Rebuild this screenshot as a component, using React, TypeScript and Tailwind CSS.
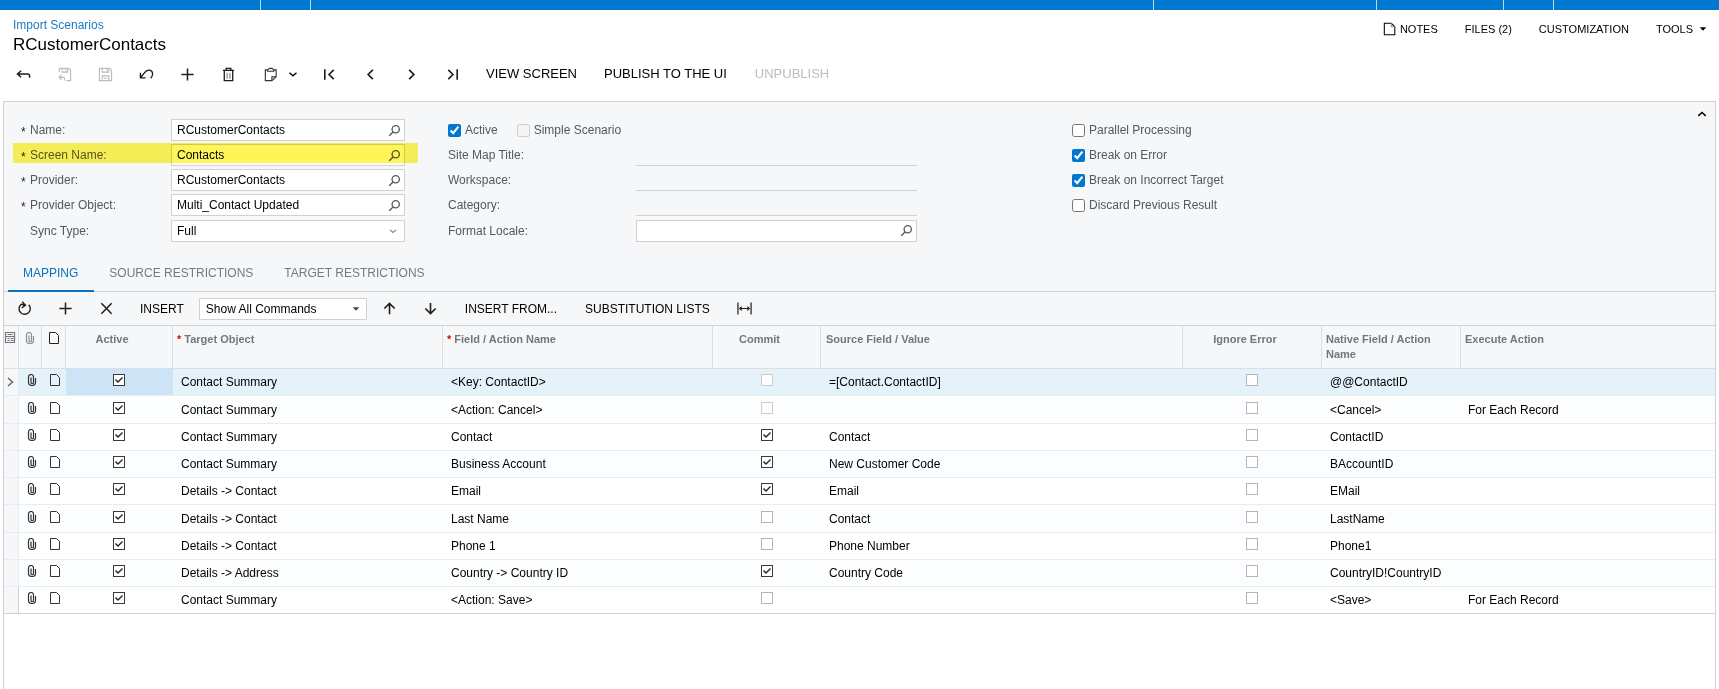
import { useState, type ReactNode } from 'react'

type IconProps = { className?: string; box?: number; children: ReactNode }

function Icon({ className = 'size-4', box = 16, children }: IconProps) {
  return (
    <svg
      viewBox={`0 0 ${box} ${box}`}
      fill="none"
      stroke="currentColor"
      strokeWidth="1.2"
      className={className}
      aria-hidden="true"
    >
      {children}
    </svg>
  )
}

const icons = {
  back: <path d="M5.5 4 1.500 7.500 5.500 11M1.500 7.500H12.500Q14.500 7.500 14.500 9.500V11.500" strokeWidth="1.500" />,
  saveClose: (
    <>
      <path d="M2.500 5.500V1.500H12.500L14.500 3.500V14.500H10M5.500 2V5.500H11.500V2M9.500 2.500V4.500" />
      <path d="M5 8.500 2 11 5 13.500M2 11H6.500Q8 11 8 12.500V14.500" />
    </>
  ),
  save: <path d="M1.500 1.500H12.500L14.500 3.500V14.500H1.500ZM4.500 1.500V5.500H11.500V1.500M9.500 2.500V4.500M4.500 14.500V9.500H11.500V14.500M6.500 12H9.500" />,
  undo: <path d="M1.500 6V11.500H7M1.800 11.200 5.500 6.500C9 1.500 14.500 3 14.500 7.500C14.500 9.500 13.500 11 12.500 12" strokeWidth="1.400" />,
  plus: <path d="M8 1.500V14.500M1.500 8H14.500" strokeWidth="1.600" />,
  trash: (
    <>
      <path d="M2 3.500H14M3.500 3.500V14.500H12.500V3.500M5.500 3.500V1.500H10.500V3.500" strokeWidth="1.400" />
      <path d="M6.500 6V12.500M9.500 6V12.500" stroke="#6f8797" />
    </>
  ),
  clipboard: (
    <>
      <path d="M5 3H2.500V14.500H9.500L14 10.500V3H11.500" />
      <path d="M5 4.500V3L7 1.500H9.500L11.500 3V4.500ZM9.500 14.500V10.500H14" />
    </>
  ),
  down: <path d="m4 6.500 4 3.500 4-3.500" strokeWidth="1.600" />,
  up: <path d="M3 10.500 8 6l5 4.500" strokeWidth="2" />,
  first: <path d="M3 2.500V13.500M12.500 3 7.500 8l5 5" strokeWidth="1.700" />,
  prev: <path d="M10.500 3 5.500 8l5 5" strokeWidth="1.800" />,
  next: <path d="m5.500 3 5 5-5 5" strokeWidth="1.800" />,
  last: <path d="m3.500 3 5 5-5 5M13 2.500V13.500" strokeWidth="1.700" />,
  search: (
    <>
      <circle cx="9.500" cy="6.500" r="4.500" strokeWidth="1.600" />
      <path d="M6.500 9.500 1.500 14.500" strokeWidth="1.800" />
    </>
  ),
  note: (
    <>
      <path d="M1.500 1.500H9.500L13.500 5.500V14.500H1.500Z" />
      <path d="M9.500 1.500V5.500H13.500" stroke="#999" />
    </>
  ),
  refresh: <path d="M12.500 4A6 6 0 1 1 4.500 3.500L8.500 4.500M5.500 .800 9 4.500 5 7.500" strokeWidth="1.500" />,
  close: <path d="m2.500 2.500 11 11M13.500 2.500l-11 11" strokeWidth="1.600" />,
  arrowUp: <path d="M8 2.500V14M2.500 8 8 2.500 13.500 8" strokeWidth="1.700" />,
  arrowDown: <path d="M8 2V13.500M2.500 8 8 13.500 13.500 8" strokeWidth="1.700" />,
  fit: <path d="M1 1.500V14.500M15 1.500V14.500M3 8H13M5 6 3 8l2 2M11 6l2 2-2 2" strokeWidth="1.300" />,
  caret: <path d="M1.500 4.500H14.500L8 11.500Z" fill="currentColor" stroke="none" />,
}

// drawn on a 12px grid for the narrow table columns
const cellIcons = {
  page: <path d="M1.500 .500H7.500L10.500 3.500V11.500H1.500Z" strokeWidth="1" />,
  clip: <path d="M9.500 4V8.500A3.500 3 0 0 1 2.500 8.500V3A2.300 2.300 0 0 1 7.500 3V8.500A1.200 1.200 0 0 1 5 8.500V3.500" strokeWidth="1.200" />,
  form: <path d="M1.500 .500H10.500V10.500H1.500ZM1.500 4.500H10.500M3.500 2.500H8.500M3.500 6.500H5.500M6.500 6.500H9.500M3.500 8.500H5.500M6.500 8.500H9.500" />,
  current: <path d="m4 2 4.500 4L4 10" strokeWidth="1.500" />,
}

type ToolProps = { label: string; icon: ReactNode; disabled?: boolean }

function Tool({ label, icon, disabled }: ToolProps) {
  return (
    <button
      type="button"
      aria-label={label}
      disabled={disabled}
      className="flex h-8 w-[41px] items-center justify-center text-[#1c1c1c] disabled:text-[#bcbcbc]"
    >
      <Icon className="size-[15px]">{icon}</Icon>
    </button>
  )
}

const lookups = [
  { id: 'name', label: 'Name:', value: 'RCustomerContacts' },
  { id: 'screen', label: 'Screen Name:', value: 'Contacts', marked: true },
  { id: 'provider', label: 'Provider:', value: 'RCustomerContacts' },
  { id: 'object', label: 'Provider Object:', value: 'Multi_Contact Updated' },
]

const plainFields = [
  { id: 'title', label: 'Site Map Title:' },
  { id: 'workspace', label: 'Workspace:' },
  { id: 'category', label: 'Category:' },
]

const options = [
  { label: 'Parallel Processing', checked: false },
  { label: 'Break on Error', checked: true },
  { label: 'Break on Incorrect Target', checked: true },
  { label: 'Discard Previous Result', checked: false },
]

type Row = {
  target: string
  field: string
  commit: boolean
  commitDisabled?: boolean
  source: string
  native: string
  execute?: string
}

const rows: Row[] = [
  { target: 'Contact Summary', field: '<Key: ContactID>', commit: false, commitDisabled: true, source: '=[Contact.ContactID]', native: '@@ContactID' },
  { target: 'Contact Summary', field: '<Action: Cancel>', commit: false, commitDisabled: true, source: '', native: '<Cancel>', execute: 'For Each Record' },
  { target: 'Contact Summary', field: 'Contact', commit: true, source: 'Contact', native: 'ContactID' },
  { target: 'Contact Summary', field: 'Business Account', commit: true, source: 'New Customer Code', native: 'BAccountID' },
  { target: 'Details -> Contact', field: 'Email', commit: true, source: 'Email', native: 'EMail' },
  { target: 'Details -> Contact', field: 'Last Name', commit: false, source: 'Contact', native: 'LastName' },
  { target: 'Details -> Contact', field: 'Phone 1', commit: false, source: 'Phone Number', native: 'Phone1' },
  { target: 'Details -> Address', field: 'Country -> Country ID', commit: true, source: 'Country Code', native: 'CountryID!CountryID' },
  { target: 'Contact Summary', field: '<Action: Save>', commit: false, source: '', native: '<Save>', execute: 'For Each Record' },
]

type CheckProps = { label: string; checked?: boolean; disabled?: boolean }

function CheckOption({ label, checked, disabled }: CheckProps) {
  return (
    <label className="flex h-[22px] items-center gap-1">
      <input type="checkbox" defaultChecked={checked} disabled={disabled} className="size-[13px] accent-[#0078d0]" />
      {label}
    </label>
  )
}

function CellCheck({ label, checked, disabled }: CheckProps) {
  return (
    <span className="mx-auto grid size-3 place-items-center">
      <input
        type="checkbox"
        aria-label={label}
        defaultChecked={checked}
        disabled={disabled}
        className="peer col-start-1 row-start-1 size-3 appearance-none border border-[#b4b5b6] bg-white checked:border-[#3a3a3a] disabled:border-[#c9cbcd]"
      />
      <svg
        viewBox="0 0 12 12"
        fill="none"
        stroke="#222"
        strokeWidth="1.400"
        className="pointer-events-none invisible col-start-1 row-start-1 size-3 peer-checked:visible"
        aria-hidden="true"
      >
        <path d="m2.500 5.500 2.500 2.500 4.500-4.500" />
      </svg>
    </span>
  )
}

const inputBox = 'flex h-[22px] items-center border border-[#cfd1d3] bg-white text-black'

function SummaryForm() {
  return (
    <div className="relative grid grid-cols-[444px_624px_1fr] pt-[17px] text-[#55585c]">
      <div className="flex flex-col gap-[3px] pl-[17px]">
        {lookups.map((f) => (
          <div key={f.id} className="relative flex h-[22px] items-center">
            <span className="w-[9px] pt-1 leading-4 text-[#222]">*</span>
            <label htmlFor={f.id} className="w-[141px]">
              {f.label}
            </label>
            <div className={`${inputBox} w-[234px]`}>
              <input id={f.id} defaultValue={f.value} className="min-w-0 flex-1 pl-[5px] outline-none" />
              <button type="button" aria-label={`Look up ${f.label}`} className="px-[3px] text-[#55585c]">
                <Icon className="size-[13px]">{icons.search}</Icon>
              </button>
            </div>
            {f.marked ? (
              <div className="pointer-events-none absolute -left-2 -top-px h-5 w-[405px] bg-[#fff558] mix-blend-multiply" />
            ) : null}
          </div>
        ))}
        <div className="flex h-[23px] items-center pl-[9px]">
          <label htmlFor="sync" className="w-[141px]">
            Sync Type:
          </label>
          <div className={`${inputBox} relative w-[234px]`}>
            <select id="sync" className="w-full appearance-none pl-[5px] outline-none">
              <option>Full</option>
            </select>
            <Icon className="pointer-events-none absolute right-[5px] size-3 text-[#7d8083]">{icons.down}</Icon>
          </div>
        </div>
      </div>

      <div className="flex flex-col gap-[3px]">
        <div className="flex gap-[19px]">
          <CheckOption label="Active" checked />
          <CheckOption label="Simple Scenario" disabled />
        </div>
        {plainFields.map((f) => (
          <div key={f.id} className="flex h-[22px] items-center">
            <label htmlFor={f.id} className="w-[188px]">
              {f.label}
            </label>
            <input id={f.id} className="h-[22px] w-[281px] border-b border-[#cfd1d3] outline-none" />
          </div>
        ))}
        <div className="flex h-[23px] items-center">
          <label htmlFor="locale" className="w-[188px]">
            Format Locale:
          </label>
          <div className={`${inputBox} w-[281px]`}>
            <input id="locale" className="min-w-0 flex-1 pl-[5px] outline-none" />
            <button type="button" aria-label="Look up locale" className="px-[3px] text-[#55585c]">
              <Icon className="size-[13px]">{icons.search}</Icon>
            </button>
          </div>
        </div>
      </div>

      <div className="flex flex-col gap-[3px]">
        {options.map((o) => (
          <CheckOption key={o.label} label={o.label} checked={o.checked} />
        ))}
      </div>

      <button type="button" aria-label="Collapse" className="absolute right-[7px] top-[6px] text-black">
        <Icon className="size-3">{icons.up}</Icon>
      </button>
    </div>
  )
}

const th = 'border-b border-r border-[#dcdee1] pt-[6px] align-top text-left leading-[15px] last:border-r-0'

function MappingTable() {
  return (
    <table className="w-full table-fixed border-separate border-spacing-0">
      <colgroup>
        <col className="w-[15px]" />
        <col className="w-[23px]" />
        <col className="w-[24px]" />
        <col className="w-[107px]" />
        <col className="w-[270px]" />
        <col className="w-[270px]" />
        <col className="w-[108px]" />
        <col className="w-[362px]" />
        <col className="w-[139px]" />
        <col className="w-[139px]" />
        <col />
      </colgroup>
      <thead className="bg-[#f5f7f9] text-[11px] text-[#74777a]">
        <tr className="h-[43px]">
          <th className={th}>
            <Icon box={12} className="size-3">{cellIcons.form}</Icon>
          </th>
          <th className={th}>
            <Icon box={12} className="mx-auto size-3 text-[#8d8f92]">{cellIcons.clip}</Icon>
          </th>
          <th className={th}>
            <Icon box={12} className="mx-auto size-3 text-[#222]">{cellIcons.page}</Icon>
          </th>
          <th className={`${th} pr-[14px]`}>
            <span className="block text-center">Active</span>
          </th>
          <th className={`${th} pl-1`}>
            <span className="mr-[3px] text-[#e00000]">*</span>Target Object
          </th>
          <th className={`${th} pl-1`}>
            <span className="mr-[3px] text-[#e00000]">*</span>Field / Action Name
          </th>
          <th className={`${th} pr-[14px]`}>
            <span className="block text-center">Commit</span>
          </th>
          <th className={`${th} pl-[5px]`}>Source Field / Value</th>
          <th className={`${th} pr-[14px]`}>
            <span className="block text-center">Ignore Error</span>
          </th>
          <th className={`${th} pl-1`}>Native Field / Action Name</th>
          <th className={`${th} pl-1`}>Execute Action</th>
        </tr>
      </thead>
      <tbody className="text-black [&_td]:border-b [&_td]:border-[#e4eef5] [&>tr:last-child>td]:border-[#cfd1d3]">
        {rows.map((r, i) => {
          const selected = i === 0
          return (
            <tr key={i} className={selected ? 'h-[27px] bg-[#e5f2fa]' : i % 4 === 1 ? 'h-7 bg-[#fbfdff]' : i % 2 ? 'h-[27px] bg-[#fbfdff]' : 'h-[27px] bg-white'}>
              <td className="border-r bg-[#f5f7f9] text-[#66696c]">
                {selected ? <Icon box={12} className="size-3">{cellIcons.current}</Icon> : null}
              </td>
              <td className="pb-1 pl-[3px] text-[#333]">
                <Icon box={12} className="mx-auto size-3">{cellIcons.clip}</Icon>
              </td>
              <td className="pb-1 pl-0.5 text-[#333]">
                <Icon box={12} className="mx-auto size-3">{cellIcons.page}</Icon>
              </td>
              <td className={selected ? 'bg-[#cce4f6] pb-1 pr-0.5' : 'pb-1 pr-0.5'}>
                <CellCheck label="Active" checked />
              </td>
              <td className="pl-2">{r.target}</td>
              <td className="pl-2">{r.field}</td>
              <td className="pb-1">
                <CellCheck label="Commit" checked={r.commit} disabled={r.commitDisabled} />
              </td>
              <td className="pl-2">{r.source}</td>
              <td className="pb-1 pr-0.5">
                <CellCheck label="Ignore Error" />
              </td>
              <td className="whitespace-nowrap pl-2">{r.native}</td>
              <td className="pl-[7px]">{r.execute}</td>
            </tr>
          )
        })}
      </tbody>
    </table>
  )
}

const tabs = ['MAPPING', 'SOURCE RESTRICTIONS', 'TARGET RESTRICTIONS']

export default function App() {
  const [tab, setTab] = useState('MAPPING')

  return (
    <div className="flex min-h-screen flex-col bg-white font-['Liberation_Sans',Arial,sans-serif] text-[12px] leading-4 text-black">
      <div className="flex h-[10px] bg-[#0078d0]">
        <div className="w-[261px] border-r border-[#b5dcf5]" />
        <div className="w-[50px] border-r border-[#b5dcf5]" />
        <div className="flex-1 border-r border-[#b5dcf5]" />
        <div className="w-[223px] border-r border-[#b5dcf5]" />
        <div className="w-[127px] border-r border-[#b5dcf5]" />
        <div className="w-[50px] border-r border-[#b5dcf5]" />
        <div className="w-[165px]" />
      </div>

      <header className="flex items-start justify-between pl-[13px] pr-3 pt-[7px]">
        <div>
          <a href="#scenarios" className="block text-[#1a7bc4]">
            Import Scenarios
          </a>
          <h1 className="text-[17px] leading-6">RCustomerContacts</h1>
        </div>
        <nav className="flex items-center gap-[27px] pt-1 text-[11px]">
          <button type="button" className="flex items-center gap-[3px]">
            <Icon className="size-[14px]">{icons.note}</Icon>
            NOTES
          </button>
          <button type="button">FILES (2)</button>
          <button type="button">CUSTOMIZATION</button>
          <button type="button" className="flex items-center gap-[6px]">
            TOOLS
            <Icon className="size-2">{icons.caret}</Icon>
          </button>
        </nav>
      </header>

      <div className="mt-px flex h-8 items-center pl-[3px] text-[13px]">
        <Tool label="Back" icon={icons.back} />
        <Tool label="Save and close" icon={icons.saveClose} disabled />
        <Tool label="Save" icon={icons.save} disabled />
        <Tool label="Undo" icon={icons.undo} />
        <Tool label="Add" icon={icons.plus} />
        <Tool label="Delete" icon={icons.trash} />
        <button type="button" aria-label="Clipboard" className="flex h-8 w-[60px] items-center gap-2 pl-[14px]">
          <Icon className="size-[15px] text-[#333]">{icons.clipboard}</Icon>
          <Icon className="size-[14px]">{icons.down}</Icon>
        </button>
        <Tool label="First" icon={icons.first} />
        <Tool label="Previous" icon={icons.prev} />
        <Tool label="Next" icon={icons.next} />
        <Tool label="Last" icon={icons.last} />
        <button type="button" className="px-[13px]">VIEW SCREEN</button>
        <button type="button" className="px-[14px]">PUBLISH TO THE UI</button>
        <button type="button" disabled className="px-[14px] text-[#bcbcbc]">UNPUBLISH</button>
      </div>

      <main className="mx-[3px] mt-[11px] flex-1 border-x border-t border-[#cfd1d3]">
        <div className="bg-[#f5f7f9]">
          <SummaryForm />

          <div role="tablist" className="mt-[13px] flex h-[37px] border-b border-[#cfd1d3] pl-1">
            {tabs.map((t) => (
              <button
                key={t}
                type="button"
                role="tab"
                aria-selected={t === tab}
                onClick={() => setTab(t)}
                className={`-mb-px border-b-2 pl-[15px] pr-4 ${t === tab ? 'border-[#0b72c0] text-[#0b72c0]' : 'border-transparent text-[#77797c]'}`}
              >
                {t}
              </button>
            ))}
          </div>

          <div className="flex h-[34px] items-center border-b border-[#cfd1d3]">
            <Tool label="Refresh" icon={icons.refresh} />
            <Tool label="Add row" icon={icons.plus} />
            <Tool label="Delete row" icon={icons.close} />
            <button type="button" className="px-[13px]">INSERT</button>
            <div className={`${inputBox} relative mx-0.5 w-[168px]`}>
              <select aria-label="Commands" className="w-full appearance-none pl-[6px] outline-none">
                <option>Show All Commands</option>
              </select>
              <Icon className="pointer-events-none absolute right-[6px] size-2 text-[#444]">{icons.caret}</Icon>
            </div>
            <Tool label="Move up" icon={icons.arrowUp} />
            <Tool label="Move down" icon={icons.arrowDown} />
            <button type="button" className="px-[14px]">INSERT FROM...</button>
            <button type="button" className="px-[14px]">SUBSTITUTION LISTS</button>
            <Tool label="Fit to screen" icon={icons.fit} />
          </div>
        </div>

        <MappingTable />
      </main>
    </div>
  )
}
